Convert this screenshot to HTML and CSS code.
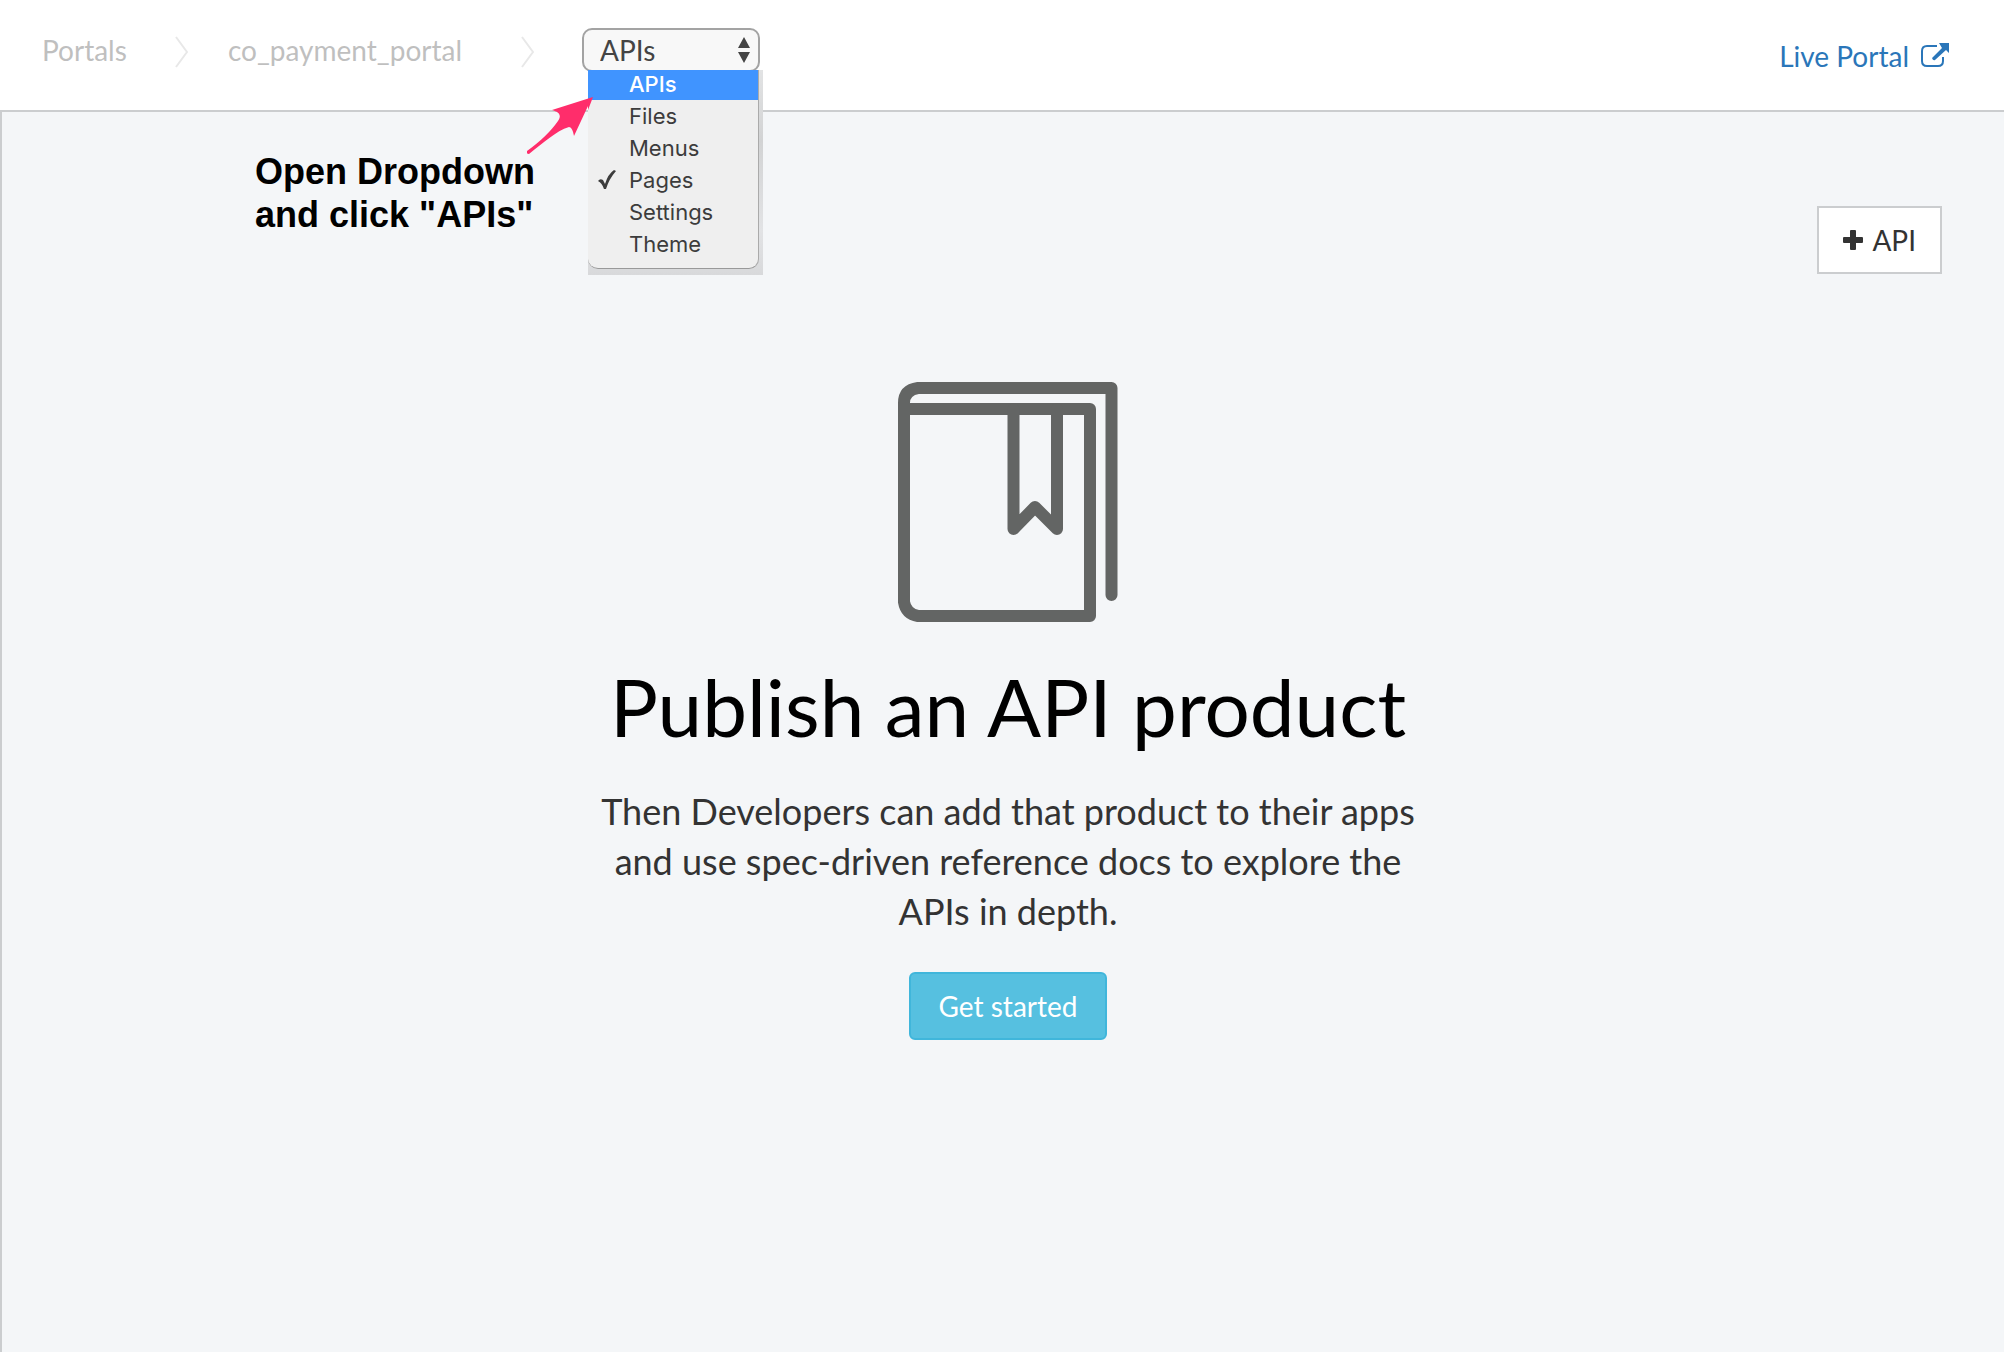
FILE: index.html
```html
<!DOCTYPE html>
<html lang="en">
<head>
<meta charset="utf-8">
<title>co_payment_portal - APIs</title>
<link rel="stylesheet" href="styles.css">
</head>
<body>
<header class="topbar">
  <nav class="crumbs" aria-label="Breadcrumb">
    <a href="#">Portals</a>
    <svg class="chevron" viewBox="0 0 14 32" aria-hidden="true"><path d="M2 1 13 16 2 31"/></svg>
    <a href="#">co_payment_portal</a>
    <svg class="chevron" viewBox="0 0 14 32" aria-hidden="true"><path d="M2 1 13 16 2 31"/></svg>
    <div class="section-picker">
      <select class="picker" aria-label="Portal section">
        <option>APIs</option><option>Files</option><option>Menus</option>
        <option>Pages</option><option>Settings</option><option>Theme</option>
      </select>
      <svg class="picker-arrows" viewBox="0 0 14 26" aria-hidden="true"><path d="M7 0 13 11H1zM7 26 13 15H1z"/></svg>
      <div class="menu-shadow">
        <ul class="menu" role="listbox" aria-label="Sections">
          <li class="active" role="option">APIs</li>
          <li role="option">Files</li>
          <li role="option">Menus</li>
          <li role="option" aria-selected="true"><svg class="check" viewBox="0 0 18 20" aria-hidden="true"><path d="M0 11Q2 8 5 10L7 14Q10 4 16 0L18 1Q11 9 8 19H6Q4 13 0 11z"/></svg>Pages</li>
          <li role="option">Settings</li>
          <li role="option">Theme</li>
        </ul>
      </div>
    </div>
  </nav>
  <a class="live" href="#">Live Portal
    <svg viewBox="0 0 28 26" aria-hidden="true"><path class="frame" d="M16 3H6Q1 3 1 8V18Q1 23 6 23H17Q22 23 22 18V14"/><path d="M18 0H28V10L25 7 14 17Q12 18 11 15L21 5z"/></svg>
  </a>
</header>
<main class="content">
  <div class="toolbar">
    <button class="add" type="button">
      <svg viewBox="0 0 20 20" aria-hidden="true"><path d="M8 0H12Q13 0 13 1V7H19Q20 7 20 8V12Q20 13 19 13H13V19Q13 20 12 20H8Q7 20 7 19V13H1Q0 13 0 12V8Q0 7 1 7H7V1Q7 0 8 0z"/></svg>
      API
    </button>
  </div>
  <section class="empty">
    <svg class="book" viewBox="0 0 220 240" aria-hidden="true">
      <path d="M213.5 213V6H20Q6 8 6 21V220Q8 232 20 234H192V27H6"/>
      <path d="M115.500 27V147L137 125 159 147V27"/>
    </svg>
    <h1>Publish an API product</h1>
    <p>Then Developers can add that product to their apps and use spec-driven reference docs to explore the APIs in depth.</p>
    <button class="start" type="button">Get started</button>
  </section>
</main>
<p class="note">Open Dropdown<br>and click "APIs"</p>
<svg class="pointer" viewBox="0 0 66 58" aria-hidden="true"><path d="M66 0 25 13C32 15 35 18 31 24C24 34 14 44 0 54Q-1 57 2 57C16 46 29 34 42 30C44 30 46 33 47 39L61 9V13z"/></svg>
</body>
</html>
```
FILE: styles.css
```css
* { box-sizing: border-box; }
body {
  margin: 0;
  min-height: 100vh;
  display: flex;
  flex-direction: column;
  position: relative;
  background: #fff;
  color: #333;
  font: 28px/36px Lato, sans-serif;
}
a { color: inherit; text-decoration: none; }
button { font: inherit; cursor: pointer; }
.topbar {
  height: 110px;
  display: flex;
  justify-content: space-between;
  padding: 28px 55px 0 42px;
}
.crumbs {
  display: grid;
  grid-template-columns: 132px 54px 292px 62px auto;
  align-items: start;
  color: #bfbfbf;
}
.crumbs > a { line-height: 44px; }
.chevron {
  width: 14px;
  height: 32px;
  margin-top: 8px;
  fill: none;
  stroke: #e8e8e8;
  stroke-width: 2;
}
.section-picker { position: relative; }
.picker {
  appearance: none;
  display: block;
  width: 178px;
  height: 44px;
  padding: 0 16px;
  border: 2px solid #a3a3a3;
  border-radius: 10px;
  background: #f8f8f8;
  color: #444;
  font: inherit;
}
.picker-arrows {
  position: absolute;
  top: 9px;
  right: 9px;
  width: 14px;
  height: 26px;
  fill: #444;
}
.menu-shadow {
  position: absolute;
  top: 42px;
  left: 6px;
  width: 175px;
  padding: 0 4px 6px 0;
  background: linear-gradient(#e2e3e4, #d2d3d4 70px, #e2e3e5 160px, #d8d9db);
}
.menu {
  margin: 0;
  padding: 0 0 8px;
  list-style: none;
  background: #efefef;
  border-bottom: 1px solid #999;
  border-right: 1px solid #aaa;
  border-radius: 0 0 10px 10px;
  color: #3c3c3c;
  font: 22px/32px Inter, sans-serif;
}
.menu li { position: relative; padding-left: 41px; }
.menu .active { height: 30px; line-height: 28px; background: #4094ff; color: #fff; font-weight: 500; }
.check {
  position: absolute;
  left: 10px;
  top: 6px;
  width: 18px;
  height: 20px;
  fill: #3c3c3c;
}
.live {
  display: flex;
  align-items: center;
  gap: 12px;
  height: 56px;
  color: #2a76b9;
}
.live svg { width: 28px; height: 26px; fill: currentColor; }
.live .frame { fill: none; stroke: currentColor; stroke-width: 2; }
.content {
  flex: 1;
  padding: 94px 62px 94px 72px;
  background: #f4f6f8;
  border-top: 2px solid #cbcdcf;
  border-left: 2px solid #cbcdcf;
}
.toolbar { display: flex; justify-content: flex-end; }
.add {
  display: flex;
  align-items: center;
  gap: 9px;
  height: 68px;
  padding: 0 24px;
  border: 2px solid #cbcdcf;
  background: #fff;
  color: #333;
}
.add svg { width: 20px; height: 20px; fill: currentColor; }
.empty {
  display: flex;
  flex-direction: column;
  align-items: center;
  margin-top: 108px;
  text-align: center;
}
.book {
  width: 220px;
  height: 240px;
  fill: none;
  stroke: #636564;
  stroke-width: 12;
  stroke-linecap: round;
  stroke-linejoin: round;
}
h1 {
  margin: 34px 0 0;
  color: #000;
  font-size: 80px;
  line-height: 100px;
  font-weight: 400;
}
.empty p {
  max-width: 840px;
  margin: 30px 0 0;
  font-size: 36px;
  line-height: 50px;
}
.start {
  height: 68px;
  margin-top: 36px;
  padding: 0 28px;
  border: 2px solid #40b6db;
  border-radius: 6px;
  background: #56c0e0;
  color: #fff;
}
.note {
  position: absolute;
  left: 255px;
  top: 150px;
  margin: 0;
  color: #000;
  font: bold 36px/43px "Liberation Sans", sans-serif;
}
.pointer {
  position: absolute;
  left: 527px;
  top: 97px;
  width: 66px;
  height: 58px;
  fill: #ff2d6b;
}
```
